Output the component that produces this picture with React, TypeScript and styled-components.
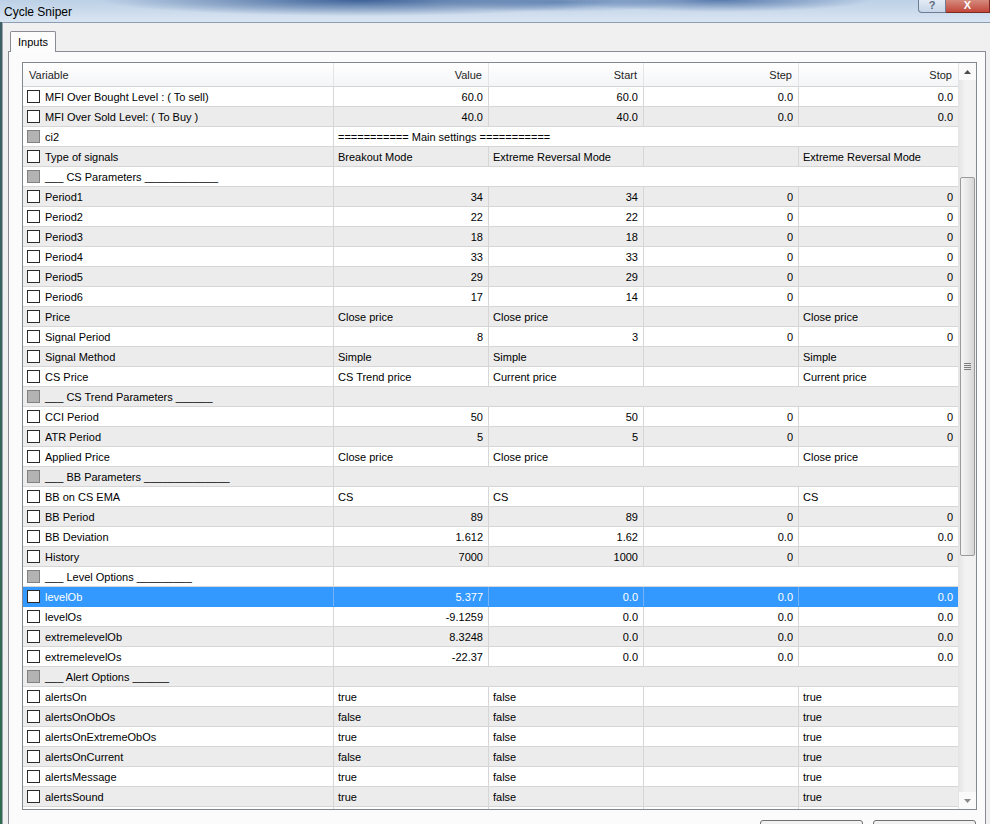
import styled, { createGlobalStyle } from 'styled-components';

const GlobalStyle = createGlobalStyle`
  html, body {
    margin: 0;
    padding: 0;
  }
  body {
    width: 990px;
    height: 824px;
    overflow: hidden;
    font-family: 'Liberation Sans', Arial, sans-serif;
    background: #44626a;
  }
`;

const Window = styled.div`
  width: 990px;
  height: 824px;
  display: flex;
  flex-direction: column;
  overflow: hidden;
  background: linear-gradient(to bottom, #3e5f66, #2f6b4e);
`;

const TitleBar = styled.div`
  height: 22px;
  flex: none;
  display: flex;
  justify-content: space-between;
  align-items: flex-start;
  background:
    radial-gradient(ellipse 260px 16px at 360px 0px, rgba(38, 78, 138, 0.85), transparent),
    radial-gradient(ellipse 150px 12px at 720px 0px, rgba(46, 86, 148, 0.7), transparent),
    radial-gradient(ellipse 120px 10px at 560px 2px, rgba(70, 110, 165, 0.6), transparent),
    linear-gradient(to bottom, #bcd0e6, #dae5f1);
`;

const Title = styled.span`
  font-size: 12px;
  color: #000;
  padding: 5px 0 0 4px;
`;

const Caption = styled.div`
  display: flex;
  height: 14px;
`;

const CaptionButton = styled.div<{ $close?: boolean }>`
  width: ${(p) => (p.$close ? '44px' : '28px')};
  height: 13px;
  display: flex;
  align-items: center;
  justify-content: center;
  box-sizing: border-box;
  border: 1px solid ${(p) => (p.$close ? '#7b2a20' : '#6c7d94')};
  border-top: none;
  border-left: ${(p) => (p.$close ? 'none' : '1px solid #6c7d94')};
  border-radius: ${(p) => (p.$close ? '0' : '0 0 0 4px')};
  background: ${(p) =>
    p.$close
      ? 'linear-gradient(to bottom, #d58b7e, #c2463a)'
      : 'linear-gradient(to bottom, #e3ebf5, #c8d6e8)'};
  color: ${(p) => (p.$close ? '#fff' : '#5d6b80')};
  font-size: 11px;
  font-weight: bold;
  line-height: 1;
  padding-bottom: 2px;
`;

const Body = styled.div`
  flex: 1;
  margin-left: 2px;
  border-left: 1px solid #9ba5b1;
  border-top: 1px solid #8b9db3;
  background: #f0f0f0;
  display: flex;
  flex-direction: column;
  padding: 8px 0 0 5px;
  min-height: 0;
`;

const TabStrip = styled.div`
  display: flex;
  padding-left: 2px;
  position: relative;
  z-index: 1;
  margin-bottom: -1px;
`;

const Tab = styled.div`
  height: 21px;
  padding: 0 7px;
  box-sizing: border-box;
  display: flex;
  align-items: center;
  font-size: 11px;
  color: #000;
  background: #fcfcfc;
  border: 1px solid #898c95;
  border-bottom: none;
  border-radius: 2px 2px 0 0;
`;

const Panel = styled.div`
  width: 978px;
  box-sizing: border-box;
  flex: 1;
  border: 1px solid #898c95;
  background: #fbfbfb;
  padding: 10px 8px 0 13px;
  display: flex;
  flex-direction: column;
`;

const Grid = styled.div`
  height: 748px;
  box-sizing: border-box;
  border: 1px solid #828790;
  background: #fff;
  display: flex;
  overflow: hidden;
  flex: none;
`;

const List = styled.div`
  flex: 1;
  display: flex;
  flex-direction: column;
  overflow: hidden;
`;

const columns = '310px 155px 155px 155px 1fr';

const Header = styled.div`
  display: grid;
  grid-template-columns: ${columns};
  height: 24px;
  flex: none;
  box-sizing: border-box;
  border-bottom: 1px solid #d5d5d5;
  background: linear-gradient(to bottom, #ffffff, #f4f5f7);
`;

const HeadCell = styled.div<{ $right?: boolean }>`
  display: flex;
  align-items: center;
  justify-content: ${(p) => (p.$right ? 'flex-end' : 'flex-start')};
  padding: 0 6px;
  font-size: 11px;
  color: #1e1e1e;
  border-left: 1px solid #e3e5e8;
  &:first-child {
    border-left: none;
  }
`;

const Row = styled.div<{ $alt: boolean; $selected?: boolean }>`
  display: grid;
  grid-template-columns: ${columns};
  height: 20px;
  flex: none;
  box-sizing: border-box;
  border-bottom: 1px solid ${(p) => (p.$selected ? '#3399ff' : '#d6d6d6')};
  background: ${(p) => (p.$selected ? '#3399ff' : p.$alt ? '#ececec' : '#ffffff')};
  color: ${(p) => (p.$selected ? '#ffffff' : '#000000')};
  font-size: 11px;
`;

const NameCell = styled.div`
  display: flex;
  align-items: center;
  gap: 5px;
  padding-left: 4px;
  white-space: pre;
  overflow: hidden;
`;

const Cell = styled.div<{ $right?: boolean; $selected?: boolean; $span?: number }>`
  display: flex;
  align-items: center;
  justify-content: ${(p) => (p.$right ? 'flex-end' : 'flex-start')};
  padding: ${(p) => (p.$right ? '0 5px 0 0' : '0 0 0 4px')};
  border-left: 1px solid ${(p) => (p.$selected ? '#74b4f6' : '#d6d6d6')};
  grid-column: span ${(p) => p.$span ?? 1};
  white-space: pre;
  overflow: hidden;
`;

const Check = styled.span<{ $group?: boolean }>`
  width: 13px;
  height: 13px;
  flex: none;
  box-sizing: border-box;
  border: 1px solid ${(p) => (p.$group ? '#808080' : '#2a2a2a')};
  background: ${(p) => (p.$group ? '#b3b3b3' : '#ffffff')};
`;

const ScrollBar = styled.div`
  width: 17px;
  flex: none;
  display: flex;
  flex-direction: column;
  border-left: 1px solid #e4e4e4;
  background: linear-gradient(to right, #e6e6e6, #f3f3f3 40%, #f0f0f0);
`;

const ArrowButton = styled.div`
  height: 17px;
  flex: none;
  display: flex;
  align-items: center;
  justify-content: center;
  background: #fafafa;
`;

const Track = styled.div`
  flex: 1;
  padding-top: 97px;
  display: flex;
  flex-direction: column;
  align-items: center;
`;

const Thumb = styled.div`
  width: 15px;
  height: 379px;
  box-sizing: border-box;
  border: 1px solid #9a9a9a;
  border-radius: 2px;
  background: linear-gradient(to right, #f4f4f4, #e8e8e8 50%, #d6d6d6);
  display: flex;
  align-items: center;
  justify-content: center;
`;

const Grip = styled.div`
  width: 7px;
  display: flex;
  flex-direction: column;
  gap: 1px;
  & > span {
    height: 1px;
    background: #7d7d7d;
  }
`;

const ButtonRow = styled.div`
  display: flex;
  justify-content: flex-end;
  gap: 10px;
  margin-top: 10px;
  padding-right: 1px;
`;

const PushButton = styled.div`
  width: 103px;
  height: 23px;
  box-sizing: border-box;
  border: 1px solid #707070;
  border-radius: 3px;
  background: linear-gradient(to bottom, #f2f2f2, #ebebeb 50%, #dddddd);
`;

type RowData = {
  name: string;
  group?: boolean;
  note?: string;
  cells?: string[];
  num?: boolean;
};

const rows: RowData[] = [
  { name: 'MFI Over Bought Level : ( To sell)', cells: ['60.0', '60.0', '0.0', '0.0'], num: true },
  { name: 'MFI Over Sold Level: ( To Buy )', cells: ['40.0', '40.0', '0.0', '0.0'], num: true },
  { name: 'ci2', group: true, note: '=========== Main settings ===========' },
  { name: 'Type of signals', cells: ['Breakout Mode', 'Extreme Reversal Mode', '', 'Extreme Reversal Mode'] },
  { name: '___ CS Parameters ____________', group: true },
  { name: 'Period1', cells: ['34', '34', '0', '0'], num: true },
  { name: 'Period2', cells: ['22', '22', '0', '0'], num: true },
  { name: 'Period3', cells: ['18', '18', '0', '0'], num: true },
  { name: 'Period4', cells: ['33', '33', '0', '0'], num: true },
  { name: 'Period5', cells: ['29', '29', '0', '0'], num: true },
  { name: 'Period6', cells: ['17', '14', '0', '0'], num: true },
  { name: 'Price', cells: ['Close price', 'Close price', '', 'Close price'] },
  { name: 'Signal Period', cells: ['8', '3', '0', '0'], num: true },
  { name: 'Signal Method', cells: ['Simple', 'Simple', '', 'Simple'] },
  { name: 'CS Price', cells: ['CS Trend price', 'Current price', '', 'Current price'] },
  { name: '___ CS Trend Parameters ______', group: true },
  { name: 'CCI Period', cells: ['50', '50', '0', '0'], num: true },
  { name: 'ATR Period', cells: ['5', '5', '0', '0'], num: true },
  { name: 'Applied Price', cells: ['Close price', 'Close price', '', 'Close price'] },
  { name: '___ BB Parameters ______________', group: true },
  { name: 'BB on CS EMA', cells: ['CS', 'CS', '', 'CS'] },
  { name: 'BB Period', cells: ['89', '89', '0', '0'], num: true },
  { name: 'BB Deviation', cells: ['1.612', '1.62', '0.0', '0.0'], num: true },
  { name: 'History', cells: ['7000', '1000', '0', '0'], num: true },
  { name: '___ Level Options _________', group: true },
  { name: 'levelOb', cells: ['5.377', '0.0', '0.0', '0.0'], num: true },
  { name: 'levelOs', cells: ['-9.1259', '0.0', '0.0', '0.0'], num: true },
  { name: 'extremelevelOb', cells: ['8.3248', '0.0', '0.0', '0.0'], num: true },
  { name: 'extremelevelOs', cells: ['-22.37', '0.0', '0.0', '0.0'], num: true },
  { name: '___ Alert Options ______', group: true },
  { name: 'alertsOn', cells: ['true', 'false', '', 'true'] },
  { name: 'alertsOnObOs', cells: ['false', 'false', '', 'true'] },
  { name: 'alertsOnExtremeObOs', cells: ['true', 'false', '', 'true'] },
  { name: 'alertsOnCurrent', cells: ['false', 'false', '', 'true'] },
  { name: 'alertsMessage', cells: ['true', 'false', '', 'true'] },
  { name: 'alertsSound', cells: ['true', 'false', '', 'true'] },
];

const SELECTED = 25;

const UpArrow = () => (
  <svg width="7" height="4" viewBox="0 0 7 4">
    <path d="M0 4 L3.5 0 L7 4 Z" fill="#4d4d4d" />
  </svg>
);

const DownArrow = () => (
  <svg width="7" height="4" viewBox="0 0 7 4">
    <path d="M0 0 L7 0 L3.5 4 Z" fill="#8a8a8a" />
  </svg>
);

function App() {
  return (
    <>
      <GlobalStyle />
      <Window>
        <TitleBar>
          <Title>Cycle Sniper</Title>
          <Caption>
            <CaptionButton>?</CaptionButton>
            <CaptionButton $close>X</CaptionButton>
          </Caption>
        </TitleBar>
        <Body>
          <TabStrip>
            <Tab>Inputs</Tab>
          </TabStrip>
          <Panel>
            <Grid>
              <List>
                <Header>
                  <HeadCell>Variable</HeadCell>
                  <HeadCell $right>Value</HeadCell>
                  <HeadCell $right>Start</HeadCell>
                  <HeadCell $right>Step</HeadCell>
                  <HeadCell $right>Stop</HeadCell>
                </Header>
                {rows.map((r, i) => {
                  const selected = i === SELECTED;
                  return (
                    <Row key={r.name} $alt={i % 2 === 1} $selected={selected}>
                      <NameCell>
                        <Check $group={r.group} />
                        {r.name}
                      </NameCell>
                      {r.group ? (
                        <Cell $span={4}>{r.note ?? ''}</Cell>
                      ) : (
                        r.cells?.map((c, j) => (
                          <Cell key={j} $right={r.num} $selected={selected}>
                            {c}
                          </Cell>
                        ))
                      )}
                    </Row>
                  );
                })}
                {/* next row, only its column lines peek out */}
                <Row $alt={false}>
                  <NameCell />
                  <Cell />
                  <Cell />
                  <Cell />
                  <Cell />
                </Row>
              </List>
              <ScrollBar>
                <ArrowButton>
                  <UpArrow />
                </ArrowButton>
                <Track>
                  <Thumb>
                    <Grip>
                      <span />
                      <span />
                      <span />
                      <span />
                    </Grip>
                  </Thumb>
                </Track>
                <ArrowButton>
                  <DownArrow />
                </ArrowButton>
              </ScrollBar>
            </Grid>
            <ButtonRow>
              <PushButton />
              <PushButton />
            </ButtonRow>
          </Panel>
        </Body>
      </Window>
    </>
  );
}

export default App;
